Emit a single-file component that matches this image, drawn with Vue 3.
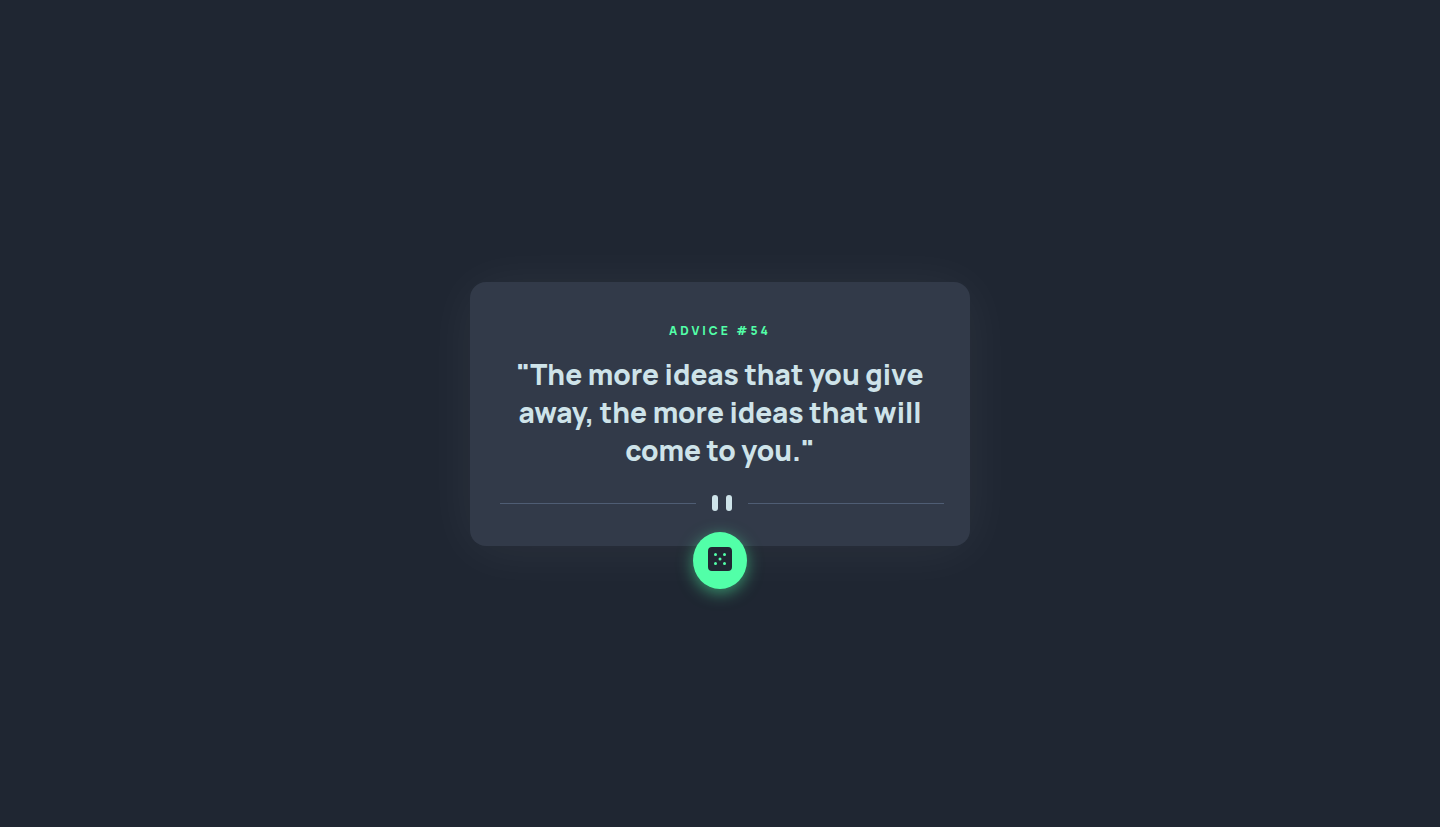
<script setup>
import { ref } from 'vue'

const advice = ref({ id: 54, text: 'The more ideas that you give away, the more ideas that will come to you.' })
</script>

<template>
  <main class="page">
    <section class="card">
      <h1 class="label">ADVICE #{{ advice.id }}</h1>
      <p class="quote">"{{ advice.text }}"</p>
      <svg class="divider" width="444" height="16" viewBox="0 0 444 16" aria-hidden="true">
        <path fill="#4F5D74" d="M0 8h196v1H0zM248 8h196v1H248z" />
        <g fill="#CEE3E9">
          <rect x="212" width="6" height="16" rx="3" />
          <rect x="226" width="6" height="16" rx="3" />
        </g>
      </svg>
      <button class="dice" type="button" aria-label="New advice">
        <svg width="24" height="24" viewBox="0 0 24 24" aria-hidden="true">
          <path fill="#202733" d="M20 0H4a4.005 4.005 0 0 0-4 4v16a4.005 4.005 0 0 0 4 4h16a4.005 4.005 0 0 0 4-4V4a4.005 4.005 0 0 0-4-4ZM7.500 18a1.500 1.500 0 1 1 0-3 1.500 1.500 0 0 1 0 3Zm0-9a1.500 1.500 0 1 1 0-3 1.500 1.500 0 0 1 0 3Zm4.500 4.500a1.500 1.500 0 1 1 0-3 1.500 1.500 0 0 1 0 3Zm4.500 4.500a1.500 1.500 0 1 1 0-3 1.500 1.500 0 0 1 0 3Zm0-9a1.500 1.500 0 1 1 0-3 1.500 1.500 0 0 1 0 3Z" />
        </svg>
      </button>
    </section>
  </main>
</template>

<style>
body {
  margin: 0;
  background: #1f2632;
}
</style>

<style scoped>
.page {
  min-height: 100vh;
  display: flex;
  align-items: center;
  justify-content: center;
  font-family: Manrope, Inter, sans-serif;
  text-align: center;
}
.card {
  position: relative;
  box-sizing: border-box;
  width: 100%;
  max-width: 500px;
  padding: 40px 30px 35px;
  border-radius: 16px;
  background: #323a49;
  box-shadow: 0 4px 56px rgba(255, 255, 255, 0.06);
}
.label {
  margin: 0 0 15px;
  color: #52ffa8;
  font-size: 12px;
  line-height: 18px;
  font-weight: 800;
  letter-spacing: 3px;
}
.quote {
  margin: 0 0 26px;
  color: #cee3e9;
  font-size: 28px;
  line-height: 38px;
  font-weight: 800;
}
.divider {
  display: block;
}
.dice {
  position: absolute;
  left: 50%;
  bottom: -43px;
  transform: translateX(-50%);
  width: 54px;
  height: 57px;
  padding: 0;
  border: 0;
  border-radius: 50%;
  background: #52ffa8;
  box-shadow: 0 4px 16px rgba(82, 255, 168, 0.5);
  cursor: pointer;
}
</style>
